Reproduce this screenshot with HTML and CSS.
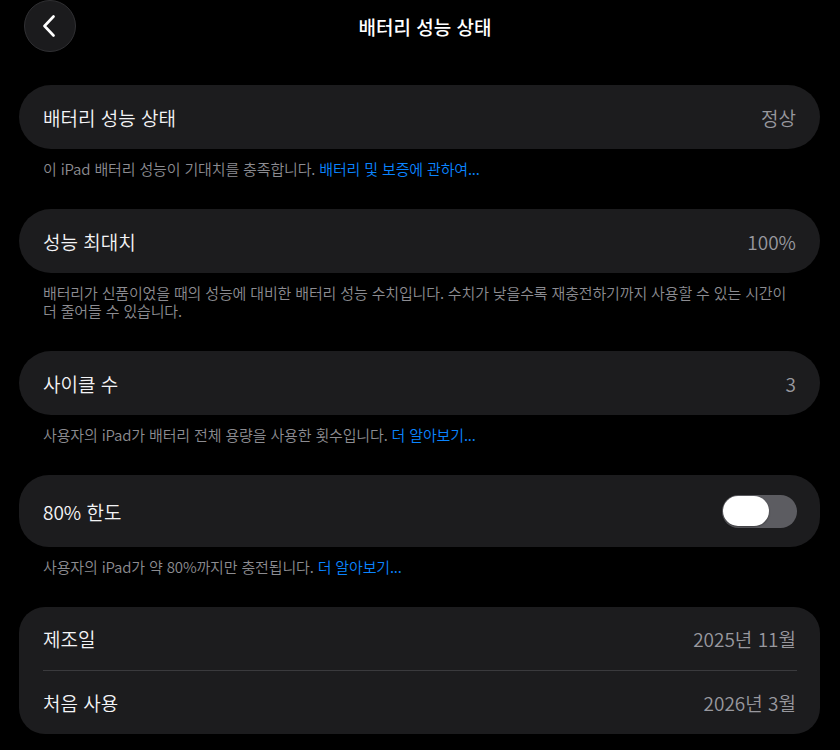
FILE: index.html
```html
<!DOCTYPE html>
<html lang="ko">
<head>
<meta charset="utf-8">
<title>배터리 성능 상태</title>
<link rel="stylesheet" href="styles.css">
</head>
<body>
<header class="nav">
  <div class="nav-left">
    <button class="back" aria-label="뒤로">
      <svg width="16" height="22" viewBox="0 0 16 22" aria-hidden="true">
        <path d="M12.5 1.5 L3.5 11 L12.5 20.5" fill="none" stroke="#fff" stroke-width="2.6" stroke-linecap="round" stroke-linejoin="round"/>
      </svg>
    </button>
  </div>
  <h1 class="nav-title">배터리 성능 상태</h1>
  <div class="nav-right"></div>
</header>

<main class="list">
  <section class="group">
    <div class="card pill">
      <div class="row"><span class="label">배터리 성능 상태</span><span class="value">정상</span></div>
    </div>
    <p class="footer">이 iPad 배터리 성능이 기대치를 충족합니다. <a class="link">배터리 및 보증에 관하여...</a></p>
  </section>

  <section class="group">
    <div class="card pill">
      <div class="row"><span class="label">성능 최대치</span><span class="value">100%</span></div>
    </div>
    <p class="footer">배터리가 신품이었을 때의 성능에 대비한 배터리 성능 수치입니다. 수치가 낮을수록 재충전하기까지 사용할 수 있는 시간이 더 줄어들 수 있습니다.</p>
  </section>

  <section class="group">
    <div class="card pill">
      <div class="row"><span class="label">사이클 수</span><span class="value">3</span></div>
    </div>
    <p class="footer">사용자의 iPad가 배터리 전체 용량을 사용한 횟수입니다. <a class="link">더 알아보기...</a></p>
  </section>

  <section class="group">
    <div class="card toggle-card">
      <div class="row row-tall"><span class="label">80% 한도</span>
        <span class="switch"><span class="knob"></span></span>
      </div>
    </div>
    <p class="footer">사용자의 iPad가 약 80%까지만 충전됩니다. <a class="link">더 알아보기...</a></p>
  </section>

  <section class="group">
    <div class="card multi">
      <div class="row"><span class="label">제조일</span><span class="value">2025년 11월</span></div>
      <div class="sep"></div>
      <div class="row"><span class="label">처음 사용</span><span class="value">2026년 3월</span></div>
    </div>
  </section>
</main>
</body>
</html>
```

FILE: styles.css
```css
* { box-sizing: border-box; }

html, body {
  margin: 0;
  padding: 0;
  background: #000;
  color: #fff;
  font-family: "Noto Sans CJK KR", "Noto Sans", sans-serif;
}

body {
  width: 840px;
  height: 750px;
  overflow: hidden;
}

.nav {
  display: grid;
  grid-template-columns: 1fr auto 1fr;
  align-items: center;
  height: 52px;
  padding: 0 14px 0 24px;
}

.nav-left { display: flex; }

.back {
  width: 52px;
  height: 52px;
  border-radius: 50%;
  border: 1px solid #303033;
  background: #1b1b1d;
  display: flex;
  align-items: center;
  justify-content: center;
  padding: 0 3px 0 0;
  margin-top: -1px;
  cursor: pointer;
}

.nav-title {
  margin: 0;
  font-size: 19px;
  font-weight: 500;
  color: #fff;
}

.list {
  padding: 33px 20px 0 19px;
}

.card {
  background: #1c1c1e;
}

.pill { border-radius: 32px; }
.toggle-card { border-radius: 30px; }
.multi { border-radius: 26px; }

.row {
  display: flex;
  align-items: center;
  justify-content: space-between;
  height: 64px;
  padding: 0 24px;
}

.multi .row { height: 63px; }

.row-tall {
  height: 72px;
  padding-right: 23px;
}

.label {
  font-size: 19px;
  font-weight: 350;
  color: #f4f4f6;
}

.value {
  font-size: 19px;
  font-weight: 350;
  color: #98989e;
}

.sep {
  height: 1px;
  margin: 0 23px 0 24px;
  background: #3a3a3d;
}

.footer {
  margin: 0;
  padding: 11px 28px 31px 24px;
  font-size: 15px;
  font-weight: 350;
  line-height: 18px;
  letter-spacing: -0.15px;
  color: #8c8c91;
}

.link {
  color: #0a84ff;
  text-decoration: none;
}

.switch {
  display: flex;
  align-items: center;
  width: 75px;
  height: 33px;
  border-radius: 17px;
  background: #5c5c61;
  padding: 0 0 0 1px;
}

.knob {
  width: 46px;
  height: 30px;
  border-radius: 15px;
  background: #fff;
  box-shadow: 0 1px 2px rgba(0,0,0,0.35);
}
```
